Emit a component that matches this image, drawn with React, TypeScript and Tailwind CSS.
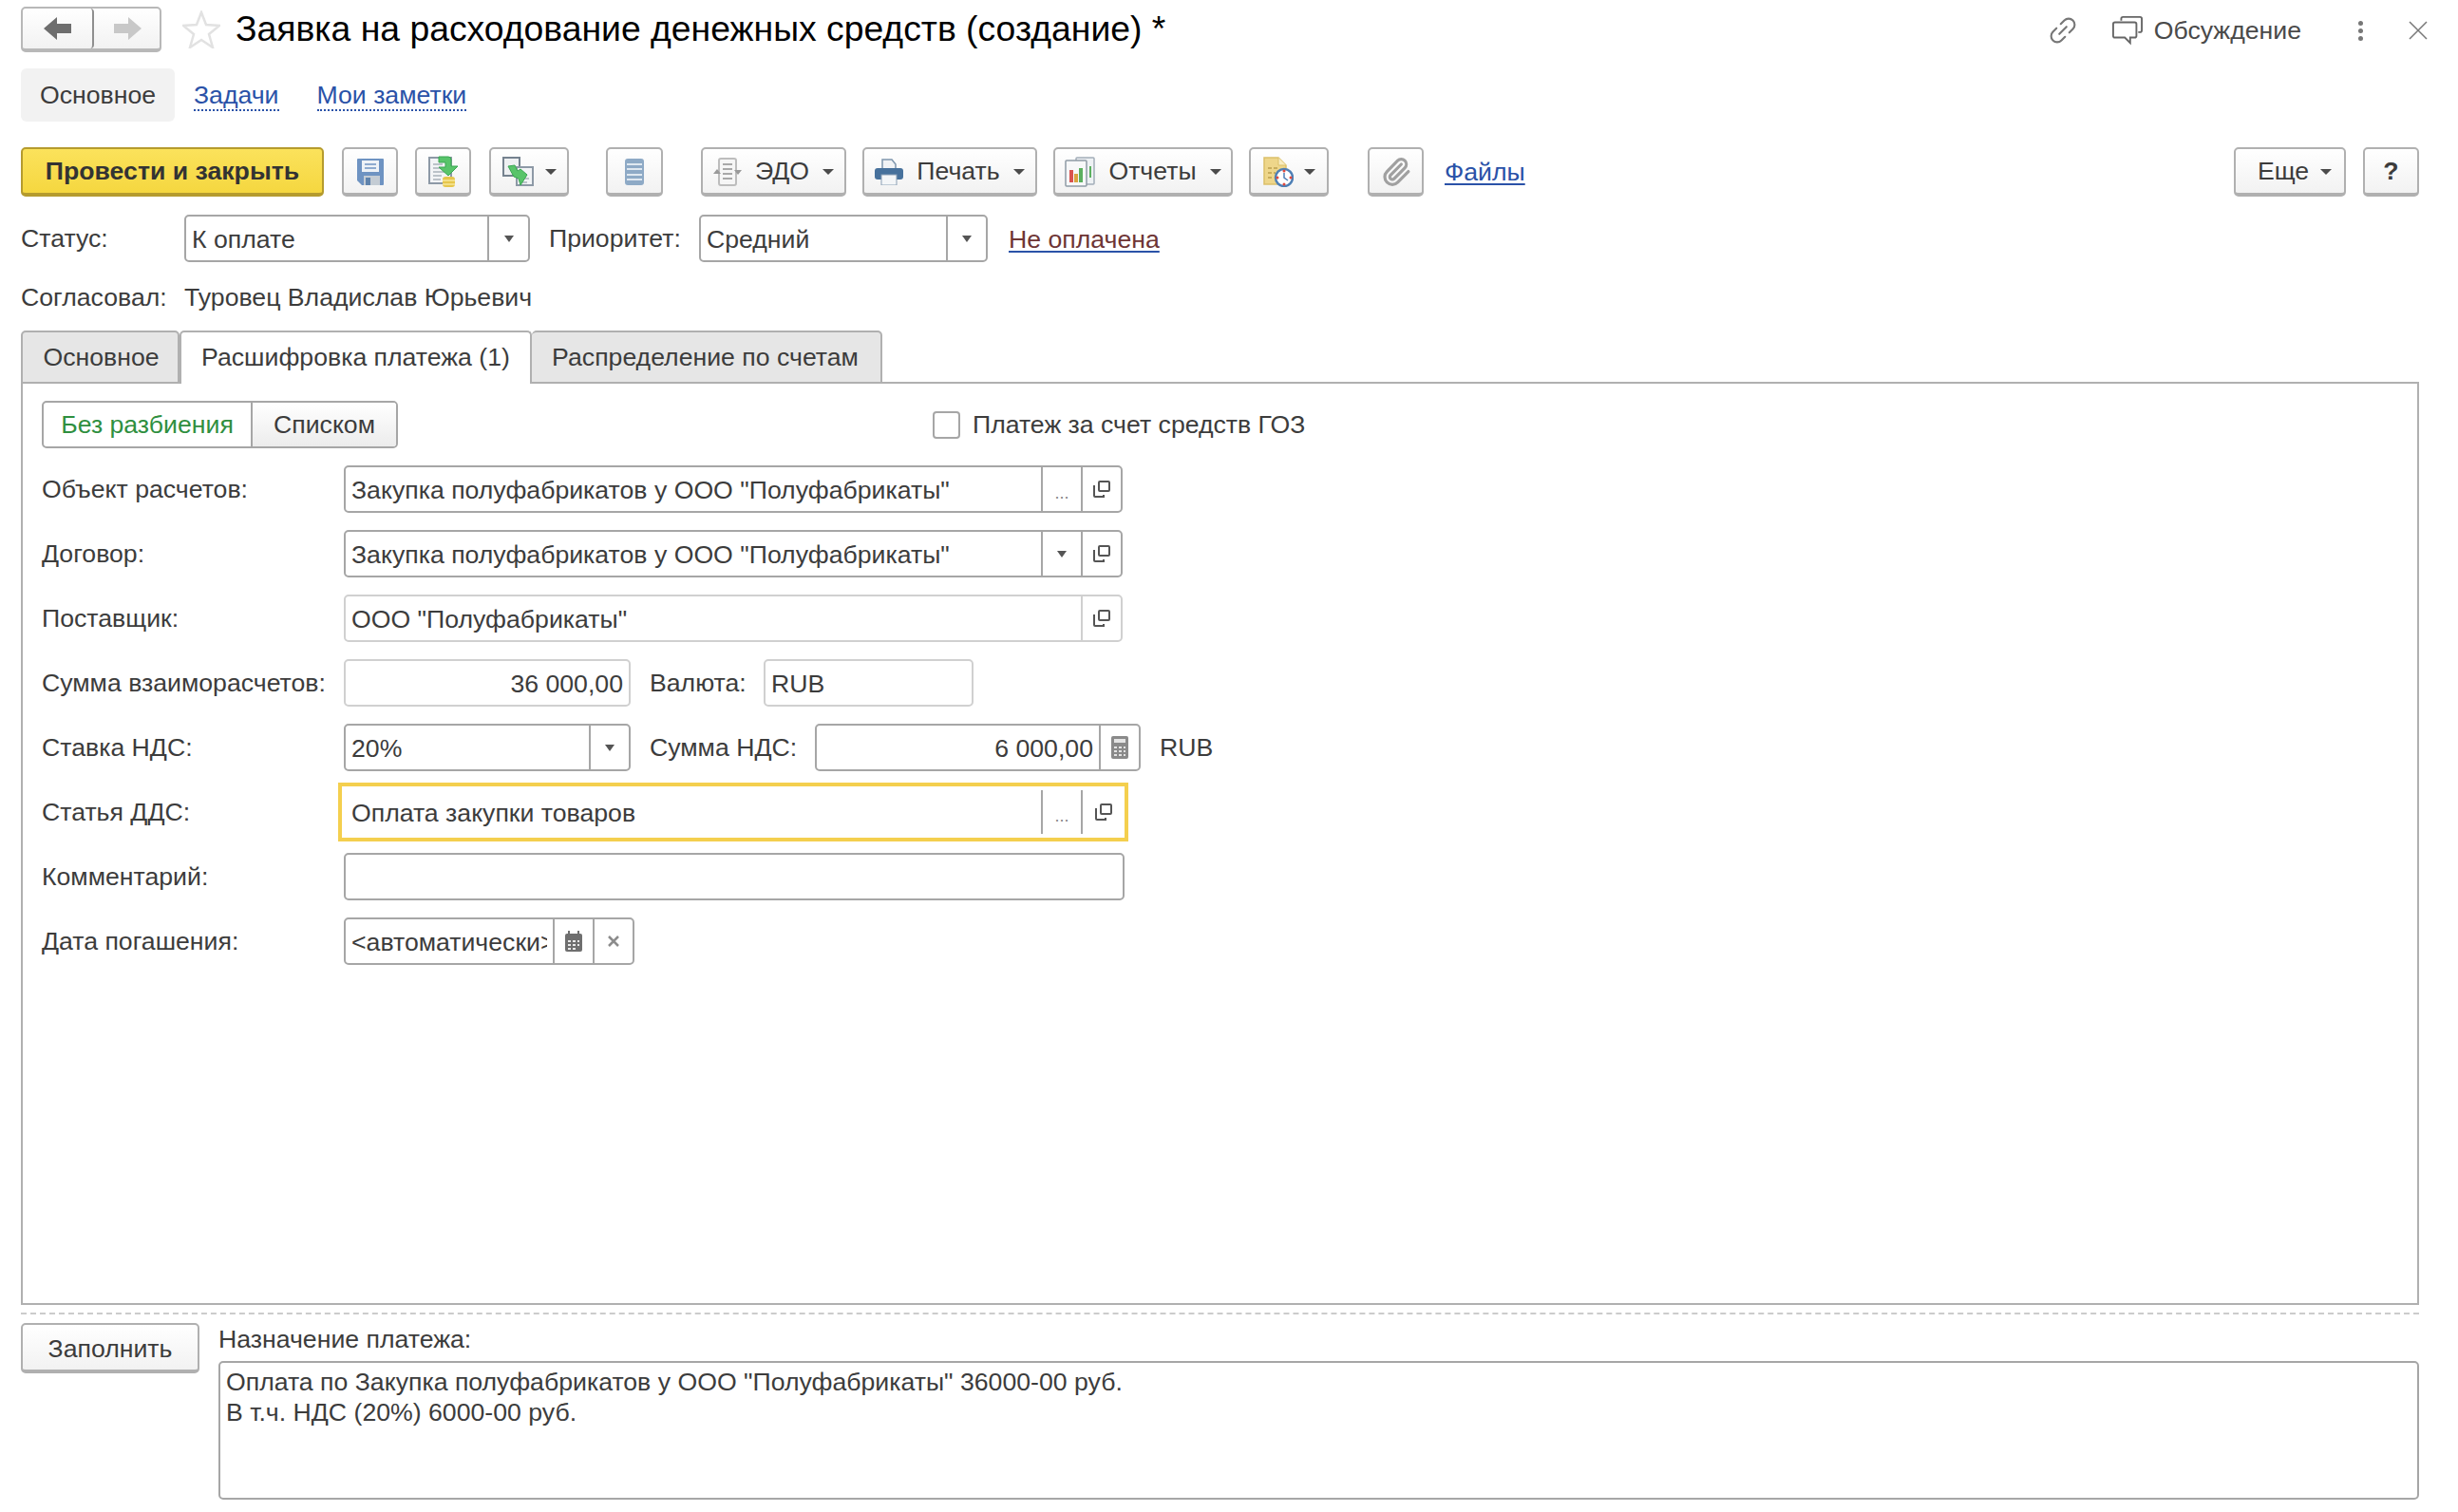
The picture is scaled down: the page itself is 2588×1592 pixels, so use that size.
import type { ReactNode } from 'react'
import { Paperclip } from 'lucide-react'

const caret = 'h-0 w-0 border-x-[6px] border-t-[6px] border-x-transparent border-t-[#4b4b4b]'
const fieldBorder = 'rounded-[5px] border-2 border-[#a6a6a6] bg-white'
const btn = 'flex h-[52px] items-center justify-center rounded-[5px] border-2 border-[#b0b0b0] border-b-[4px] bg-gradient-to-b from-white to-[#f2f2f2] pt-[2px] text-[#3c3c3c]'

function Caret() {
    return <span className={caret} />
}

function OpenIcon() {
    return (
        <svg width="20" height="20" viewBox="0 0 20 20" fill="none" stroke="#555" strokeWidth="2">
            <rect x="7" y="2" width="11" height="10" rx="1" />
            <path d="M3 7H2v10a1 1 0 0 0 1 1h9v-2" />
        </svg>
    )
}

function Dots() {
    return <span className="mt-2 text-[18px] leading-none text-[#888]">...</span>
}

function SmallCaret() {
    return <span className="h-0 w-0 border-x-[5px] border-t-[7px] border-x-transparent border-t-[#555]" />
}

function Addon({ children, w = 'w-[42px]', light = false }: { children: ReactNode; w?: string; light?: boolean }) {
    return <div className={`flex h-full shrink-0 items-center justify-center border-l-2 ${light ? 'border-[#d0d0d0]' : 'border-[#a6a6a6]'} ${w}`}>{children}</div>
}

function Field({ w, value, right, light, children }: { w: string; value?: string; right?: boolean; light?: boolean; children?: ReactNode }) {
    return (
        <div className={`flex h-[50px] shrink-0 items-center rounded-[5px] border-2 bg-white ${light ? 'border-[#d0d0d0]' : 'border-[#a6a6a6]'} ${w}`}>
            <div className="min-w-0 flex-1 px-[6px]">
                <div className={`overflow-hidden whitespace-nowrap pt-[2px] leading-[32px] ${right ? 'text-right' : ''}`}>{value}</div>
            </div>
            {children}
        </div>
    )
}

function Row({ label, children }: { label: string; children: ReactNode }) {
    return (
        <div className="mb-[18px] flex h-[50px] items-center">
            <div className="w-[318px] shrink-0">{label}</div>
            {children}
        </div>
    )
}

function IconBtn({ w, children }: { w: string; children: ReactNode }) {
    return <div className={`${btn} ${w}`}>{children}</div>
}

function SaveIcon() {
    return (
        <svg width="28" height="28" viewBox="0 0 28 28">
            <path d="M1 0h26a1 1 0 0 1 1 1v26a1 1 0 0 1-1 1H5l-5-5V1a1 1 0 0 1 1-1z" fill="#6e93c2" />
            <rect x="5" y="2" width="18" height="12" fill="#eef2f7" />
            <path d="M8 6h12M8 10h12" stroke="#8fabcf" strokeWidth="2" />
            <rect x="7" y="18" width="17" height="10" fill="#c4ccd4" />
            <rect x="9" y="20" width="5" height="8" fill="#5f83ad" />
        </svg>
    )
}

function PostIcon() {
    return (
        <svg width="32" height="34" viewBox="0 0 32 34">
            <rect x="1" y="2" width="23" height="27" fill="#f2f4f6" stroke="#8d99a6" strokeWidth="2" />
            <path d="M5 9h10M5 13h10M5 17h12M5 21h9M5 25h8" stroke="#a9b1ba" strokeWidth="1.5" />
            <path d="M11 1h10a3 3 0 0 1 3 3v7h7L21 21 11 12h7V7h-7z" fill="#58c46a" stroke="#3aa653" strokeWidth="1" />
            <rect x="15" y="22" width="13" height="11" rx="3" fill="#e6c64c" />
            <path d="M15 26h13M15 30h13" stroke="#f6e79a" strokeWidth="1.5" />
        </svg>
    )
}

function CreateBasedIcon() {
    return (
        <svg width="33" height="31" viewBox="0 0 33 31">
            <rect x="1" y="1" width="17" height="19" fill="#eef0f2" stroke="#75828f" strokeWidth="2" />
            <rect x="15" y="11" width="17" height="19" fill="#f2f4f6" stroke="#8d99a6" strokeWidth="2" />
            <path d="M20 19h6M20 23h8M20 27h6" stroke="#a9b1ba" strokeWidth="1.5" />
            <path d="M6 10l7-1 3 6 3-2 7 6-7 11-2-7-5-2z" fill="#58c46a" stroke="#3aa653" strokeWidth="1" />
        </svg>
    )
}

function RegistersIcon() {
    return (
        <svg width="20" height="28" viewBox="0 0 20 28">
            <rect x="0" y="0" width="20" height="28" rx="3" fill="#8eaac6" />
            <path d="M2 6h16M2 11h16M2 17h16M2 22h16" stroke="#dfe8f0" strokeWidth="2" />
        </svg>
    )
}

function EdoIcon() {
    return (
        <svg width="30" height="30" viewBox="0 0 30 30" fill="none">
            <rect x="6" y="1" width="18" height="28" rx="2" fill="#f6f6f6" stroke="#bdbdbd" strokeWidth="2" />
            <path d="M10 7h10M10 12h10M10 17h10M10 22h10" stroke="#a8a8a8" strokeWidth="2" />
            <path d="M0 17l4-5 4 5zM22 13l4 5 4-5z" fill="#9a9a9a" />
        </svg>
    )
}

function PrintIcon() {
    return (
        <svg width="30" height="28" viewBox="0 0 30 28">
            <path d="M8 1h10l4 5v7H8z" fill="#f1f3f5" stroke="#7f96ad" strokeWidth="1.5" />
            <rect x="0" y="10" width="30" height="12" rx="3" fill="#47719c" />
            <rect x="7" y="17" width="16" height="11" fill="#f4f6f8" stroke="#8ba0b5" strokeWidth="1" />
        </svg>
    )
}

function ReportsIcon() {
    return (
        <svg width="32" height="32" viewBox="0 0 32 32">
            <rect x="12" y="1" width="19" height="28" rx="1" fill="#eef1f4" stroke="#a2adb8" strokeWidth="1.5" />
            <rect x="1" y="4" width="22" height="27" rx="1" fill="#f7f8f9" stroke="#8f9aa5" strokeWidth="1.5" />
            <rect x="5" y="14" width="4" height="13" fill="#d9534f" />
            <rect x="10" y="18" width="4" height="9" fill="#d9a441" />
            <rect x="15" y="12" width="4" height="15" fill="#5bb05f" />
            <rect x="26" y="10" width="2" height="12" fill="#5bb05f" />
        </svg>
    )
}

function ScheduleIcon() {
    return (
        <svg width="32" height="32" viewBox="0 0 32 32">
            <path d="M1 1h15l8 8v20H1z" fill="#eed68a" stroke="#dcc06a" strokeWidth="1.5" />
            <path d="M16 1v8h8" fill="#f8ecc0" stroke="#dcc06a" strokeWidth="1" />
            <path d="M5 12h4M11 12h4M5 17h4M11 17h2M5 22h4" stroke="#c8ad5c" strokeWidth="2" />
            <circle cx="22" cy="22" r="9" fill="#fff" stroke="#4e7fb5" strokeWidth="2.5" />
            <path d="M22 17v5l4 3" fill="none" stroke="#4e7fb5" strokeWidth="1.5" />
            <circle cx="22" cy="15" r="1.5" fill="#e0483e" />
            <circle cx="22" cy="29" r="1.5" fill="#e0483e" />
            <circle cx="15" cy="22" r="1.5" fill="#e0483e" />
            <circle cx="29" cy="22" r="1.5" fill="#e0483e" />
        </svg>
    )
}

function CalcIcon() {
    return (
        <svg width="18" height="24" viewBox="0 0 18 24">
            <rect x="0" y="0" width="18" height="24" rx="2" fill="#8a8a8a" />
            <rect x="3" y="3" width="12" height="4" fill="#e4e4e4" />
            <path d="M3 11h3v2H3zM8 11h3v2H8zM13 11h2v2h-2zM3 15h3v2H3zM8 15h3v2H8zM13 15h2v2h-2zM3 19h3v2H3zM8 19h3v2H8zM13 19h2v2h-2z" fill="#e4e4e4" />
        </svg>
    )
}

function CalendarIcon() {
    return (
        <svg width="18" height="22" viewBox="0 0 18 22">
            <rect x="0" y="3" width="18" height="19" rx="2" fill="#6f6f6f" />
            <rect x="3" y="0" width="2" height="5" fill="#6f6f6f" />
            <rect x="13" y="0" width="2" height="5" fill="#6f6f6f" />
            <path d="M3 10h3v2H3zM8 10h3v2H8zM13 10h2v2h-2zM3 14h3v2H3zM8 14h3v2H8zM13 14h2v2h-2zM3 18h3v2H3zM8 18h3v2H8z" fill="#e8e8e8" />
        </svg>
    )
}

export default function App() {
    return (
        <div className="h-[1592px] w-[2588px] overflow-hidden bg-white pl-[22px] pr-[41px] font-['Liberation_Sans',Arial,sans-serif] text-[26.67px] leading-none text-[#3c3c3c]">
            {/* title bar */}
            <div className="flex h-[72px] items-start pt-[7px]">
                <div className="flex h-[48px] w-[148px] rounded-[5px] border-2 border-b-[4px] border-[#b8b8b8] bg-gradient-to-b from-white to-[#f2f2f2]">
                    <div className="flex w-[75px] items-center justify-center rounded-[4px] border-r-2 border-[#8f8f8f]">
                        <svg width="30" height="24" viewBox="0 0 30 24">
                            <path d="M14 0v7h15v10H14v7L0 12z" fill="#6e6e6e" />
                        </svg>
                    </div>
                    <div className="flex flex-1 items-center justify-center">
                        <svg width="30" height="24" viewBox="0 0 30 24">
                            <path d="M16 0v7H1v10h15v7l14-12z" fill="#c8c8c8" />
                        </svg>
                    </div>
                </div>
                <svg className="ml-[22px] mt-[4px]" width="40" height="40" viewBox="0 0 40 40" fill="none" stroke="#e2e2e2" strokeWidth="2.5">
                    <path d="M20 2l5 13 14 1-11 9 4 14-12-8-12 8 4-14L1 16l14-1z" />
                </svg>
                <h1 className="ml-[16px] whitespace-nowrap text-[37.33px] leading-[46px] text-black">Заявка на расходование денежных средств (создание) *</h1>
                <div className="ml-auto flex items-center pt-[8px]">
                    <svg width="34" height="34" viewBox="0 0 32 32" fill="none" stroke="#777" strokeWidth="2" strokeLinecap="round">
                        <g transform="rotate(-45 16 16)">
                            <path d="M13 10H8a6 6 0 0 0 0 12h5" />
                            <path d="M19 10h5a6 6 0 0 1 0 12h-5" />
                            <path d="M11 16h10" />
                        </g>
                    </svg>
                    <svg className="ml-[35px]" width="32" height="32" viewBox="0 0 34 32" fill="none" stroke="#666" strokeWidth="2">
                        <path d="M10 5V3a2 2 0 0 1 2-2h19a2 2 0 0 1 2 2v13a2 2 0 0 1-2 2h-2" />
                        <path d="M3 7h22a2 2 0 0 1 2 2v13a2 2 0 0 1-2 2h-5v6l-6-6H3a2 2 0 0 1-2-2V9a2 2 0 0 1 2-2z" />
                    </svg>
                    <span className="ml-[12px] text-[#4a4a4a]">Обсуждение</span>
                    <span className="ml-[60px] flex flex-col gap-[3px]">
                        <span className="h-[5px] w-[5px] rounded-full bg-[#777]" />
                        <span className="h-[5px] w-[5px] rounded-full bg-[#777]" />
                        <span className="h-[5px] w-[5px] rounded-full bg-[#777]" />
                    </span>
                    <svg className="ml-[48px] mr-[-9px]" width="20" height="20" viewBox="0 0 20 20" stroke="#777" strokeWidth="1.5">
                        <path d="M1 1l18 18M19 1L1 19" />
                    </svg>
                </div>
            </div>

            {/* sections */}
            <div className="flex h-[56px] items-center">
                <div className="flex h-full w-[162px] items-center justify-center rounded-[6px] bg-[#f2f2f2]">Основное</div>
                <span className="ml-[20px] mt-[4px] border-b-2 border-dotted border-[#2a52a8] pb-[2px] text-[#2a52a8]">Задачи</span>
                <span className="ml-[40px] mt-[4px] border-b-2 border-dotted border-[#2a52a8] pb-[2px] text-[#2a52a8]">Мои заметки</span>
            </div>

            {/* toolbar */}
            <div className="mt-[26px] flex h-[53px] items-center">
                <div className="flex h-[52px] w-[319px] items-center justify-center rounded-[5px] border-2 border-b-[4px] border-[#b59b2e] bg-gradient-to-b from-[#fbe25b] to-[#f5d73f] pt-[2px] font-bold text-[#333]">Провести и закрыть</div>
                <div className="ml-[19px]"><IconBtn w="w-[59px]"><SaveIcon /></IconBtn></div>
                <div className="ml-[18px]"><IconBtn w="w-[59px]"><PostIcon /></IconBtn></div>
                <div className="ml-[19px]"><IconBtn w="w-[84px] gap-[12px]"><CreateBasedIcon /><Caret /></IconBtn></div>
                <div className="ml-[39px]"><IconBtn w="w-[60px]"><RegistersIcon /></IconBtn></div>
                <div className="ml-[40px]"><IconBtn w="w-[153px] gap-[14px]"><EdoIcon />ЭДО<Caret /></IconBtn></div>
                <div className="ml-[17px]"><IconBtn w="w-[184px] gap-[14px]"><PrintIcon />Печать<Caret /></IconBtn></div>
                <div className="ml-[17px]"><IconBtn w="w-[189px] gap-[14px]"><ReportsIcon />Отчеты<Caret /></IconBtn></div>
                <div className="ml-[17px]"><IconBtn w="w-[84px] gap-[11px]"><ScheduleIcon /><Caret /></IconBtn></div>
                <div className="ml-[41px]"><IconBtn w="w-[59px]"><Paperclip size={32} strokeWidth={2.4} color="#a0a0a0" /></IconBtn></div>
                <span className="ml-[22px] mt-[2px] text-[#2a52a8] underline decoration-[#2a52a8] decoration-2 underline-offset-[3px]">Файлы</span>
                <div className="ml-auto"><IconBtn w="w-[118px] gap-[12px] pl-[10px]">Еще<Caret /></IconBtn></div>
                <div className="ml-[18px]"><IconBtn w="w-[59px]"><span className="font-bold">?</span></IconBtn></div>
            </div>

            {/* status */}
            <div className="mt-[19px] flex h-[50px] items-center">
                <div className="w-[172px]">Статус:</div>
                <Field w="w-[364px]" value="К оплате"><Addon w="w-[43px]"><SmallCaret /></Addon></Field>
                <div className="ml-[20px] w-[158px]">Приоритет:</div>
                <Field w="w-[304px]" value="Средний"><Addon w="w-[42px]"><SmallCaret /></Addon></Field>
                <span className="ml-[22px] mt-[2px] text-[#6e3535] underline decoration-[#2a52a8] decoration-2 underline-offset-[3px]">Не оплачена</span>
            </div>
            <div className="mt-[12px] flex h-[50px] items-center">
                <div className="w-[172px]">Согласовал:</div>
                <div>Туровец Владислав Юрьевич</div>
            </div>

            {/* tabs */}
            <div className="mt-[10px] flex h-[56px]">
                <div className="flex w-[167px] items-center justify-center rounded-t-[5px] border-2 border-[#b0b0b0] bg-[#e6e6e6] pl-[2px]">Основное</div>
                <div className="relative z-10 flex w-[371px] items-center justify-center rounded-t-[5px] border-2 border-b-0 border-[#b0b0b0] bg-white pb-[2px]">Расшифровка платежа (1)</div>
                <div className="flex w-[369px] items-center justify-center rounded-t-[5px] border-2 border-l-0 border-[#b0b0b0] bg-[#e6e6e6] pr-[2px]">Распределение по счетам</div>
            </div>
            <div className="-mt-[2px] h-[972px] border-2 border-[#b0b0b0] px-[20px] pt-[18px]">
                <div className="mb-[18px] flex h-[50px] items-center">
                    <div className="flex h-full w-[375px] overflow-hidden rounded-[5px] border-2 border-[#a6a6a6]">
                        <div className="flex w-[220px] items-center justify-center border-r-2 border-[#a6a6a6] text-[#2f8f3f]">Без разбиения</div>
                        <div className="flex flex-1 items-center justify-center bg-gradient-to-b from-white to-[#ececec]">Списком</div>
                    </div>
                    <span className="ml-[563px] h-[29px] w-[29px] rounded-[4px] border-2 border-[#a6a6a6] bg-white" />
                    <span className="ml-[13px]">Платеж за счет средств ГОЗ</span>
                </div>
                <Row label="Объект расчетов:">
                    <Field w="w-[820px]" value={'Закупка полуфабрикатов у ООО "Полуфабрикаты"'}>
                        <Addon><Dots /></Addon>
                        <Addon><OpenIcon /></Addon>
                    </Field>
                </Row>
                <Row label="Договор:">
                    <Field w="w-[820px]" value={'Закупка полуфабрикатов у ООО "Полуфабрикаты"'}>
                        <Addon><SmallCaret /></Addon>
                        <Addon><OpenIcon /></Addon>
                    </Field>
                </Row>
                <Row label="Поставщик:">
                    <Field w="w-[820px]" light value={'ООО "Полуфабрикаты"'}>
                        <Addon light><OpenIcon /></Addon>
                    </Field>
                </Row>
                <Row label="Сумма взаиморасчетов:">
                    <Field w="w-[302px]" light right value="36 000,00" />
                    <div className="ml-[20px] w-[120px]">Валюта:</div>
                    <Field w="w-[221px]" light value="RUB" />
                </Row>
                <Row label="Ставка НДС:">
                    <Field w="w-[302px]" value="20%"><Addon><SmallCaret /></Addon></Field>
                    <div className="ml-[20px] w-[174px]">Сумма НДС:</div>
                    <Field w="w-[343px]" right value="6 000,00"><Addon><CalcIcon /></Addon></Field>
                    <div className="ml-[20px]">RUB</div>
                </Row>
                <Row label="Статья ДДС:">
                    <div className="-ml-[6px] flex h-[62px] w-[832px] shrink-0 items-center border-[4px] border-[#f4cf4e] bg-white py-[4px] pl-[10px]">
                        <div className="flex-1 pt-[2px] leading-[32px]">Оплата закупки товаров</div>
                        <div className="flex h-full w-[42px] items-center justify-center border-l-2 border-[#a6a6a6]"><Dots /></div>
                        <div className="flex h-full w-[46px] items-center justify-center border-l-2 border-[#a6a6a6]"><OpenIcon /></div>
                    </div>
                </Row>
                <Row label="Комментарий:">
                    <Field w="w-[822px]" />
                </Row>
                <Row label="Дата погашения:">
                    <Field w="w-[306px]" value="<автоматически>">
                        <Addon><CalendarIcon /></Addon>
                        <Addon>
                            <svg width="12" height="12" viewBox="0 0 12 12" stroke="#8c8c8c" strokeWidth="2.5">
                                <path d="M1 1l10 10M11 1L1 11" />
                            </svg>
                        </Addon>
                    </Field>
                </Row>
            </div>

            {/* payment purpose */}
            <div className="mt-[8px] border-t-2 border-dashed border-[#cccccc]" />
            <div className="mt-[9px] flex">
                <div className="flex h-[53px] w-[188px] shrink-0 items-center justify-center rounded-[5px] border-2 border-b-[4px] border-[#b0b0b0] bg-gradient-to-b from-white to-[#f2f2f2] pt-[4px]">Заполнить</div>
                <div className="ml-[20px] flex-1">
                    <div className="flex h-[34px] items-center">Назначение платежа:</div>
                    <div className={`mt-[6px] h-[146px] px-[6px] pt-[4px] leading-[32px] ${fieldBorder}`}>
                        Оплата по Закупка полуфабрикатов у ООО "Полуфабрикаты" 36000-00 руб.
                        <br />
                        В т.ч. НДС (20%) 6000-00 руб.
                    </div>
                </div>
            </div>
        </div>
    )
}
